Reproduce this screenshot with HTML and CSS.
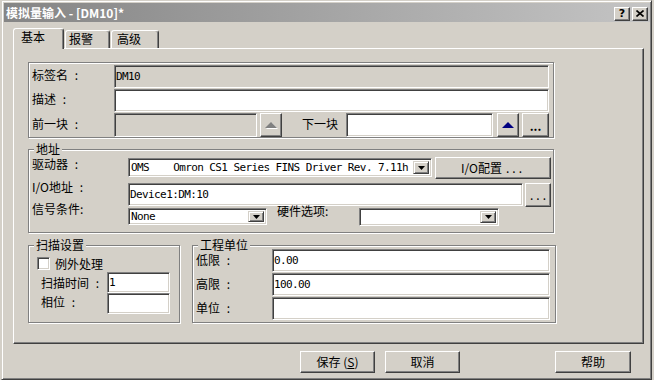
FILE: index.html
```html
<!DOCTYPE html>
<html lang="zh-CN">
<head>
    <meta charset="UTF-8">
    <title>模拟量输入 - [DM10]*</title>
    <link rel="stylesheet" href="styles.css">
</head>
<body>
    <div class="window">
        <div class="titlebar">
            <span class="title">模拟量输入 - [DM10]*</span>
            <div class="caption-btns">
                <span class="cap-btn cap-help">?</span>
                <span class="cap-btn">
                    <svg width="8" height="7" viewBox="0 0 8 7"><path d="M0.5 0.5 L7.5 6.5 M7.5 0.5 L0.5 6.5" stroke="#000" stroke-width="1.6"/></svg>
                </span>
            </div>
        </div>

        <div class="tabs">
            <div class="tab active tab-basic">基本</div>
            <div class="tab tab-alarm">报警</div>
            <div class="tab tab-adv">高级</div>
        </div>

        <div class="panel">
            <!-- tag info -->
            <div class="group group-main">
                <div class="row row-23">
                    <span class="lbl lbl-main">标签名 :</span>
                    <div class="field disabled w-435">DM10</div>
                </div>
                <div class="row row-23">
                    <span class="lbl lbl-main">描述 :</span>
                    <div class="field w-435"></div>
                </div>
                <div class="row row-24">
                    <span class="lbl lbl-main">前一块 :</span>
                    <div class="field disabled w-143"></div>
                    <span class="btn btn-arrow ml-3"><span class="tri tri-off"></span></span>
                    <span class="lbl lbl-next">下一块</span>
                    <div class="field w-147"></div>
                    <span class="btn btn-arrow ml-4"><span class="tri tri-on"></span></span>
                    <span class="btn btn-more ml-3">...</span>
                </div>
            </div>

            <!-- address -->
            <div class="group group-addr">
                <span class="group-title">地址</span>
                <div class="row row-top h-22">
                    <span class="lbl lbl-addr">驱动器 :</span>
                    <div class="combo w-304 h-19 mt-1">
                        <span class="combo-text">OMS    Omron CS1 Series FINS Driver Rev. 7.11h</span>
                        <span class="combo-arrow"><svg width="7" height="4" viewBox="0 0 7 4"><path d="M0 0 H7 L3.5 4 Z" fill="#000"/></svg></span>
                    </div>
                    <span class="btn btn-io">I/O配置 <span class="dots">...</span></span>
                </div>
                <div class="row row-top h-24 mt-4">
                    <span class="lbl lbl-addr up-3">I/O地址 :</span>
                    <div class="field w-395">Device1:DM:10</div>
                    <span class="btn btn-browse"><span class="dots">...</span></span>
                </div>
                <div class="row row-top h-18 mt-1">
                    <span class="lbl lbl-addr up-6">信号条件:</span>
                    <div class="combo w-139 h-17">
                        <span class="combo-text">None</span>
                        <span class="combo-arrow"><svg width="7" height="4" viewBox="0 0 7 4"><path d="M0 0 H7 L3.5 4 Z" fill="#000"/></svg></span>
                    </div>
                    <span class="lbl lbl-hw up-4">硬件选项:</span>
                    <div class="combo w-140 h-18">
                        <span class="combo-text"></span>
                        <span class="combo-arrow"><svg width="7" height="4" viewBox="0 0 7 4"><path d="M0 0 H7 L3.5 4 Z" fill="#000"/></svg></span>
                    </div>
                </div>
            </div>

            <div class="group-pair">
                <!-- scan settings -->
                <div class="group group-scan">
                    <span class="group-title">扫描设置</span>
                    <div class="check-row">
                        <span class="checkbox"></span>
                        <span>例外处理</span>
                    </div>
                    <div class="row scan-row mt-1">
                        <span class="lbl lbl-scan">扫描时间 :</span>
                        <div class="field w-63">1</div>
                    </div>
                    <div class="row scan-row">
                        <span class="lbl lbl-scan">相位 :</span>
                        <div class="field w-63"></div>
                    </div>
                </div>

                <!-- engineering units -->
                <div class="group group-units">
                    <span class="group-title">工程单位</span>
                    <div class="row row-23">
                        <span class="lbl lbl-units">低限 :</span>
                        <div class="field w-278">0.00</div>
                    </div>
                    <div class="row row-23">
                        <span class="lbl lbl-units">高限 :</span>
                        <div class="field w-278">100.00</div>
                    </div>
                    <div class="row row-23">
                        <span class="lbl lbl-units">单位 :</span>
                        <div class="field w-278"></div>
                    </div>
                </div>
            </div>
        </div>

        <div class="actions">
            <span class="btn btn-action">保存 (<u>S</u>)</span>
            <span class="btn btn-action btn-cancel">取消</span>
            <span class="btn btn-action btn-help">帮助</span>
        </div>
    </div>
</body>
</html>
```

FILE: styles.css
```css
:root {
    --face: #d4d0c8;
    --shadow: #808080;
    --dark: #404040;
    --light: #ffffff;
}

* {
    box-sizing: border-box;
}

body {
    margin: 0;
    background-color: var(--face);
    font-family: "Noto Sans CJK SC", "DejaVu Sans", sans-serif;
    font-size: 12px;
    line-height: 14px;
    color: #000;
}

/* Window frame */
.window {
    width: 651px;
    height: 380px;
    margin-left: 1px;
    padding: 2px 1px 2px 2px;
    border: 1px solid;
    border-color: var(--face) var(--dark) var(--dark) var(--face);
    box-shadow: inset 1px 1px 0 var(--light), inset -1px -1px 0 var(--shadow);
}

.titlebar {
    height: 19px;
    display: flex;
    align-items: center;
    justify-content: space-between;
    padding: 0 2px;
    background: linear-gradient(to right, #858585, #c4c4c4);
    color: #fff;
    font-weight: bold;
}

.title {
    font-size: 12px;
    white-space: nowrap;
}

.caption-btns {
    display: flex;
    gap: 2px;
    margin-top: 2px;
}

.cap-btn {
    width: 16px;
    height: 14px;
    display: flex;
    align-items: center;
    justify-content: center;
    background-color: var(--face);
    border: 1px solid;
    border-color: var(--light) var(--dark) var(--dark) var(--light);
    box-shadow: inset -1px -1px 0 var(--shadow);
    color: #000;
}

.cap-help {
    font-family: "DejaVu Sans", sans-serif;
    font-size: 11px;
    font-weight: bold;
    line-height: 12px;
}

/* Tabs */
.tabs {
    display: flex;
    align-items: flex-end;
    height: 20px;
    margin: 6px 0 0 9px;
}

.tab {
    height: 18px;
    padding-left: 5px;
    border: 1px solid;
    border-bottom: none;
    border-color: var(--light) var(--dark) var(--dark) var(--light);
    border-radius: 3px 3px 0 0;
    box-shadow: inset -1px 0 0 var(--shadow);
    line-height: 16px;
    margin-left: 1px;
}

.tab.active {
    height: 21px;
    margin-bottom: -1px;
    margin-left: 0;
    padding-left: 7px;
    position: relative;
    z-index: 1;
    background-color: var(--face);
}

.tab-basic { width: 51px; }
.tab-alarm { width: 45px; padding-left: 3px; }
.tab-adv { width: 48px; }

.panel {
    width: 631px;
    height: 296px;
    margin-left: 9px;
    padding: 13px 0 0 14px;
    border: 1px solid;
    border-color: var(--light) var(--dark) var(--dark) var(--light);
    box-shadow: inset -1px -1px 0 var(--shadow);
}

/* Etched group boxes */
.group {
    position: relative;
    border: 1px solid var(--shadow);
    box-shadow: 1px 1px 0 var(--light), inset 1px 1px 0 var(--light);
}

.group-title {
    position: absolute;
    top: -7px;
    left: 5px;
    padding: 0 2px;
    background-color: var(--face);
    line-height: 12px;
}

.group-main {
    width: 526px;
    height: 76px;
    padding: 2px 4px 0 3px;
    display: flex;
    flex-direction: column;
    gap: 1px;
}

.group-addr {
    width: 526px;
    height: 84px;
    margin-top: 11px;
    padding: 7px 2px 0 3px;
}

.group-pair {
    display: flex;
    gap: 12px;
    margin-top: 12px;
}

.group-scan {
    width: 152px;
    height: 78px;
    padding: 10px 9px 0 8px;
}

.group-units {
    width: 364px;
    height: 78px;
    padding: 3px 5px 0 3px;
    display: flex;
    flex-direction: column;
    gap: 1px;
}

/* Rows and labels */
.row {
    display: flex;
    align-items: center;
}

.row-top {
    align-items: flex-start;
}

.row-23 { height: 23px; }
.row-24 { height: 24px; }
.h-22 { height: 22px; }
.h-24 { height: 24px; }
.h-18 { height: 18px; }
.h-19 { height: 19px; }
.h-17 { height: 17px; }

.lbl {
    flex: none;
    white-space: nowrap;
    word-spacing: 4px;
}

.lbl-main { width: 82px; padding-bottom: 3px; }
.lbl-next { width: 44px; margin-left: 20px; padding-bottom: 3px; }
.lbl-addr { width: 96px; line-height: 13px; }
.lbl-hw { width: 82px; margin-left: 10px; line-height: 13px; }
.lbl-scan { width: 66px; }
.lbl-units { width: 76px; padding-bottom: 2px; line-height: 13px; }

.scan-row {
    height: 21px;
    padding-left: 4px;
}

.scan-row + .scan-row .lbl {
    padding-bottom: 4px;
}

.up-3 { margin-top: -3px; }
.up-4 { margin-top: -4px; }
.up-6 { margin-top: -6px; }

.mt-1 { margin-top: 1px; }
.mt-4 { margin-top: 4px; }
.ml-3 { margin-left: 3px; }
.ml-4 { margin-left: 4px; }

/* Sunken edit fields */
.field,
.combo,
.checkbox {
    flex: none;
    background-color: #fff;
    border: 1px solid;
    border-color: var(--shadow) var(--light) var(--light) var(--shadow);
    box-shadow: inset 1px 1px 0 var(--dark), inset -1px -1px 0 var(--face);
}

.field {
    height: 100%;
    display: flex;
    align-items: center;
    padding: 0 1px;
    font-family: "DejaVu Sans Mono", monospace;
    font-size: 11px;
    letter-spacing: -0.6px;
    white-space: pre;
}

.field.disabled {
    background-color: var(--face);
}

.w-435 { width: 435px; }
.w-143 { width: 143px; }
.w-147 { width: 147px; }
.w-304 { width: 304px; }
.w-395 { width: 395px; height: 23px; }
.w-139 { width: 139px; }
.w-140 { width: 140px; }
.w-63 { width: 63px; }
.w-278 { width: 278px; }

.combo {
    display: flex;
    padding: 2px;
}

.combo-text {
    flex: 1;
    display: flex;
    align-items: center;
    font-family: "DejaVu Sans Mono", monospace;
    font-size: 11px;
    letter-spacing: -0.6px;
    line-height: 12px;
    white-space: pre;
}

.combo-arrow {
    flex: none;
    width: 16px;
    display: flex;
    align-items: center;
    justify-content: center;
    background-color: var(--face);
    border: 1px solid;
    border-color: var(--face) var(--dark) var(--dark) var(--face);
    box-shadow: inset 1px 1px 0 var(--light), inset -1px -1px 0 var(--shadow);
}

.combo-arrow svg {
    display: block;
}

.checkbox {
    width: 13px;
    height: 13px;
}

.check-row {
    height: 15px;
    display: flex;
    align-items: center;
    gap: 5px;
}

/* Raised buttons */
.btn {
    flex: none;
    display: flex;
    align-items: center;
    justify-content: center;
    background-color: var(--face);
    border: 1px solid;
    border-color: var(--light) var(--dark) var(--dark) var(--light);
    box-shadow: inset -1px -1px 0 var(--shadow);
    white-space: nowrap;
}

.btn-arrow {
    width: 22px;
    height: 24px;
}

.btn-more {
    width: 27px;
    height: 24px;
    font-weight: bold;
    align-items: flex-end;
    padding-bottom: 5px;
    line-height: 10px;
}

.btn-io {
    width: 116px;
    height: 22px;
    margin-left: 3px;
}

.btn-browse {
    width: 26px;
    height: 24px;
    margin-left: 2px;
}

.dots {
    letter-spacing: 3px;
    margin-left: 4px;
}

.btn-browse .dots {
    margin-left: 3px;
}

.tri {
    width: 0;
    height: 0;
    border-left: 6px solid transparent;
    border-right: 6px solid transparent;
    border-bottom: 6px solid;
}

.tri-on {
    border-bottom-color: #000080;
}

.tri-off {
    border-bottom-color: var(--shadow);
    filter: drop-shadow(1px 1px 0 var(--light));
}

/* Dialog buttons */
.actions {
    display: flex;
    margin-top: 7px;
    padding-left: 296px;
}

.btn-action {
    width: 75px;
    height: 22px;
}

.btn-cancel {
    margin-left: 10px;
}

.btn-help {
    width: 76px;
    margin-left: 95px;
}
```
